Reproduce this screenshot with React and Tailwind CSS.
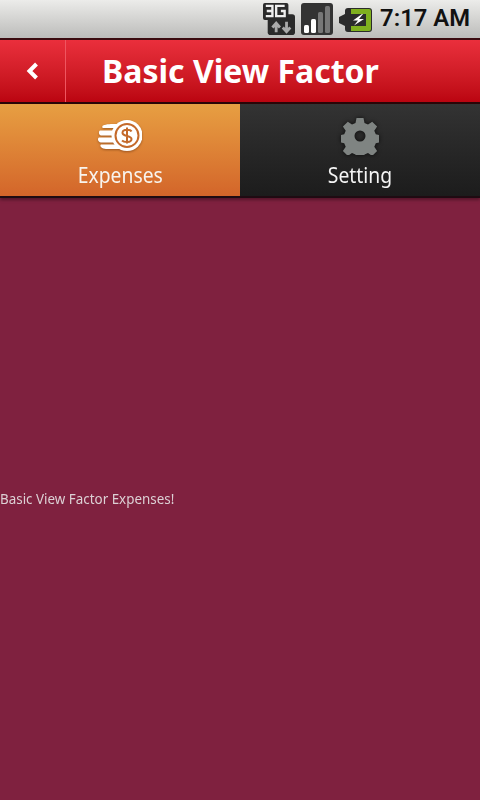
const Network3G = () => (
    <svg width="32" height="32" viewBox="0 0 34 34">
        <rect x="5" y="12" width="29" height="22" rx="3" fill="#2a2a2a" />
        <rect x="0" y="0" width="27" height="18" rx="2" fill="#2a2a2a" />
        <path d="M3 3h7v11H3M4 8.500h6" fill="none" stroke="#eee" strokeWidth="2.500" />
        <path d="M23 3h-9v11h9V8.500h-4" fill="none" stroke="#eee" strokeWidth="2.500" />
        <path d="M14 31v-9M10 26l4-4.500 4 4.500" fill="none" stroke="#aaa" strokeWidth="3" />
        <path d="M25 20v10M21 26l4 4.500 4-4.500" fill="none" stroke="#aaa" strokeWidth="3" />
    </svg>
);

const Signal = () => (
    <svg width="32" height="32" viewBox="0 0 32 32">
        <rect x="0" y="0" width="32" height="32" rx="3" fill="#333" />
        <rect x="3" y="22" width="5" height="8" rx="1.500" fill="#fff" />
        <rect x="10" y="16" width="5" height="14" rx="1.500" fill="#fff" />
        <rect x="17" y="9" width="5" height="21" rx="1.500" fill="#777" />
        <rect x="24" y="3" width="5" height="27" rx="1.500" fill="#777" />
    </svg>
);

const Battery = () => (
    <svg width="33" height="24" viewBox="0 0 33 24">
        <path d="M0 9l6-3V3a3 3 0 0 1 3-3h21a3 3 0 0 1 3 3v18a3 3 0 0 1-3 3H9a3 3 0 0 1-3-3v-3l-6-3z" fill="#2b2b2b" />
        <path d="M12 1h18a2 2 0 0 1 2 2v18a2 2 0 0 1-2 2H12v-5h15V6H12z" fill="#7fb01f" />
        <path d="M23 6l-9 6.500h5l-4 5 10-6.500h-5l4-5z" fill="#fff" />
    </svg>
);

const Coins = () => (
    <svg width="44" height="31" viewBox="0 0 44 31" className="drop-shadow-[0_1px_1px_rgba(90,40,10,0.5)]">
        <path d="M5 5.500C8 4 14 4 18 4h8v4H5c-1 0-1-2 0-2.500z" fill="#fff" />
        <path d="M2 10.500h15l-2 5H3c-2 0-3-4-1-5z" fill="#fff" />
        <path d="M1 17.500h14l1 5H3c-3 0-4-4-2-5z" fill="#fff" />
        <path d="M3 24.500h15l5 4.500H8c-4 0-7-3-5-4.500z" fill="#fff" />
        <circle cx="29" cy="15.500" r="15.500" fill="#fff" />
        <circle cx="29" cy="15.500" r="11.500" fill="none" stroke="#c4692a" strokeWidth="2" />
        <path d="M33.500 11.500c-1-2-8.500-3-9 1-.5 4.500 9 2.500 9 6.500 0 4-7.500 3.500-9.500 1.500M29 7.500v16" fill="none" stroke="#c4692a" strokeWidth="2" />
    </svg>
);

const Gear = () => (
    <svg width="38" height="38" viewBox="0 0 38 38" className="drop-shadow-[0_0_2px_rgba(0,0,0,0.7)]">
        <path fillRule="evenodd" fill="#7f8482" d="M15.500 1h7l1 5 3.500 1.500 4.200-2.800 4.900 4.900-2.800 4.200 1.500 3.500 4.700 1v7l-4.700 1-1.500 3.500 2.800 4.200-4.900 4.900-4.200-2.800-3.500 1.500-1 4.700h-7l-1-4.700-3.500-1.500-4.200 2.800-4.900-4.900 2.800-4.200-1.500-3.500-4.700-1v-7l4.700-1 1.500-3.500-2.800-4.200 4.900-4.900 4.200 2.800 3.500-1.500zM19 13.500a5.500 5.500 0 1 0 0 11 5.500 5.500 0 0 0 0-11z" />
    </svg>
);

const App = () => {
    return (
        <div className="flex flex-col h-[800px] w-[480px] bg-[#7f213f] font-['Noto_Sans','Open_Sans',sans-serif] overflow-hidden">
            <div className="h-[38px] flex items-center justify-end pr-[10px] bg-gradient-to-b from-[#ececea] to-[#bcbcba]">
                <Network3G />
                <div className="ml-[6px]"><Signal /></div>
                <div className="ml-[6px] mt-[2px]"><Battery /></div>
                <span className="ml-[8px] text-[23.8px] leading-none font-semibold text-[#111] font-['Roboto',sans-serif]">7:17 AM</span>
            </div>

            <header className="h-[66px] flex border-t-2 border-[#3b0b10] border-b-2 border-b-[#2b0608] bg-gradient-to-b from-[#ea2f3c] to-[#bb0410]">
                <div className="w-[65px] flex items-center justify-center">
                    <svg width="16" height="18" viewBox="0 0 16 18">
                        <path d="M11.500 2L4.500 9l7 7" fill="none" stroke="#fff" strokeWidth="4" />
                    </svg>
                </div>
                <div className="w-px bg-[#ef5560]"></div>
                <h1 className="ml-[36px] self-center text-[32px] leading-none font-bold text-white">Basic View Factor</h1>
            </header>

            <nav className="relative h-[94px] flex border-b-2 border-[#1f0b12] shadow-[0_2px_3px_rgba(0,0,0,0.35)]">
                <div className="flex-1 flex flex-col items-center bg-gradient-to-b from-[#e79f42] to-[#d3652a]">
                    <div className="mt-[16px] h-[31px]"><Coins /></div>
                    <span className="mt-[9px] text-[21px] leading-[30px] text-[#f8f4ee] scale-x-[0.92]">Expenses</span>
                </div>
                <div className="flex-1 flex flex-col items-center bg-gradient-to-b from-[#333333] to-[#1c1c1c]">
                    <div className="mt-[13px] h-[38px]"><Gear /></div>
                    <span className="mt-[5px] text-[21px] leading-[30px] text-[#f4f4f4] scale-x-[0.92]">Setting</span>
                </div>
            </nav>

            <main className="flex-1 flex flex-col justify-center pb-[2px]">
                <p className="text-[14px] leading-[19px] text-[#dcd0d4] origin-left scale-x-[0.957]">Basic View Factor Expenses!</p>
            </main>
        </div>
    );
};

export default App;
